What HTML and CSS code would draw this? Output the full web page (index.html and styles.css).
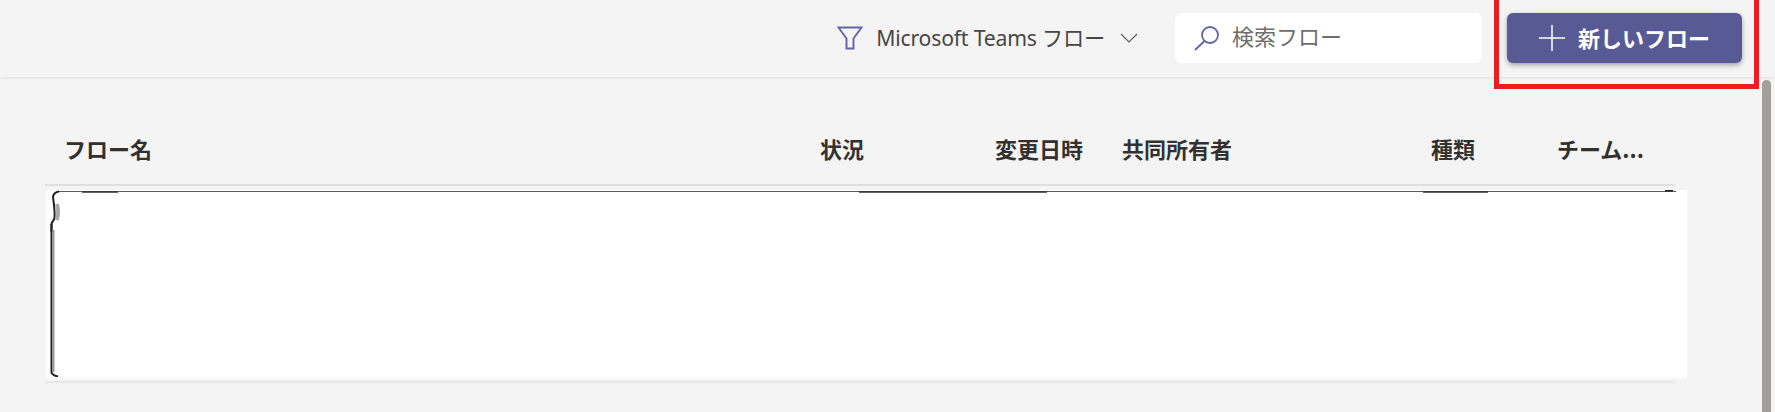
FILE: index.html
```html
<!DOCTYPE html>
<html lang="ja">
<head>
<meta charset="utf-8">
<title>Microsoft Teams フロー</title>
<link rel="stylesheet" href="styles.css">
</head>
<body>
<div class="page">
  <header class="toolbar">
    <div class="filter">
      <svg class="filter-icon" width="26" height="24" viewBox="0 0 26 24" fill="none"><path d="M1.500 1.500H24.500L16.500 12.500V22.500H9.500V12.500Z" stroke="#6264a7" stroke-width="1.900" stroke-linejoin="miter"/></svg>
      <span class="filter-label">Microsoft Teams フロー</span>
      <svg class="chevron" width="18" height="10" viewBox="0 0 18 10" fill="none"><path d="M1 1L9 9L17 1" stroke="#605e5c" stroke-width="1.100"/></svg>
    </div>
    <div class="search">
      <svg class="search-icon" width="26" height="26" viewBox="0 0 26 26" fill="none"><circle cx="16" cy="10" r="8" stroke="#6264a7" stroke-width="1.800"/><path d="M10.500 16L1 25" stroke="#6264a7" stroke-width="1.800"/></svg>
      <span class="search-label">検索フロー</span>
    </div>
    <button class="new-flow">
      <svg class="plus" width="26" height="26" viewBox="0 0 26 26" fill="none"><path d="M13 0V26M0 13H26" stroke="#fff" stroke-width="1.500"/></svg>
      <span class="new-flow-label">新しいフロー</span>
    </button>
  </header>
  <main class="content">
    <div class="table-head">
      <div>フロー名</div>
      <div>状況</div>
      <div>変更日時</div>
      <div>共同所有者</div>
      <div>種類</div>
      <div>チーム...</div>
    </div>
    <div class="masked">
      <svg class="mask-edge" width="1641" height="187" viewBox="0 0 1641 187" fill="none">
        <path d="M12 1.500H1630" stroke="#5a5a5a" stroke-width="1.100"/>
        <path d="M36 2H72M813 2H1001M1377 2H1442" stroke="#333" stroke-width="1.500"/>
        <path d="M1619 0.500h8" stroke="#222" stroke-width="2"/>
        <path d="M13 1.500C9 2 7.500 3.500 7 7C8 14 9 22 8.500 28C8 31 6 31 5.500 34V42" stroke="#222" stroke-width="2"/>
        <path d="M11 14C12.500 20 12.500 26 10.500 30" stroke="#aaa" stroke-width="4"/>
        <path d="M5.500 34V183C7 185 9 186 12 186.500" stroke="#222" stroke-width="2"/>
        <path d="M7.500 40V182" stroke="#999" stroke-width="2"/>
      </svg>
    </div>
    <div class="table-foot"></div>
  </main>
  <div class="callout"></div>
  <div class="scroll-thumb"></div>
</div>
</body>
</html>
```

FILE: styles.css
```css
* { box-sizing: border-box; }
html, body { margin: 0; height: 100%; overflow: hidden; }
body { background: #f4f4f4; font-family: "Noto Sans", "Noto Sans CJK JP", sans-serif; color: #323130; }
.page { position: relative; width: 1775px; height: 412px; overflow: hidden; }

.toolbar { height: 77px; display: flex; align-items: center; justify-content: flex-end; padding: 0 33px 1px 0; gap: 25px; background: #f4f4f4; box-shadow: 0 1px 3px rgba(0,0,0,.09); }
.filter { display: flex; align-items: center; margin-right: 12px; }
.filter-icon { margin-right: 13px; }
.filter-label { font-size: 21.2px; line-height: 28px; color: #484644; letter-spacing: -.2px; }
.chevron { margin-left: 15px; }
.search { width: 307px; height: 50px; background: #fff; border-radius: 6px; display: flex; align-items: center; padding-left: 19px; }
.search-icon { margin-right: 12px; }
.search-label { font-size: 22px; line-height: 28px; color: #706e6c; position: relative; top: -2px; }
.new-flow { width: 235px; height: 50px; border: 0; border-radius: 6px; background: #585a95; color: #fff; display: flex; align-items: center; padding: 0 0 0 32px; gap: 13px; font: 700 22px "Noto Sans CJK JP", sans-serif; box-shadow: 0 2px 5px rgba(0,0,0,.35); }
.new-flow-label { position: relative; top: -1px; }

.content { padding-left: 45px; }
.table-head { width: 1630px; height: 109px; padding: 55px 0 0 19px; display: grid; grid-template-columns: 756px 175px 127px 309px 126px 117px; border-bottom: 2px solid #e1dfdd; font: 700 22px/32px "Noto Sans CJK JP", sans-serif; color: #323130; white-space: nowrap; }
.masked { width: 1641px; height: 187px; margin: 4px 0 0 1px; background: #fff; box-shadow: 0 2px 1px #fafafa; }
.mask-edge { display: block; }
.table-foot { width: 1630px; height: 2px; margin-top: 4px; background: #e9e8e7; }

.callout { position: absolute; left: 1494px; top: -6px; width: 265px; height: 95px; border: 5px solid #ed1c24; }
.scroll-thumb { position: absolute; left: 1762px; top: 80px; width: 9px; bottom: -10px; border-radius: 5px 5px 0 0; background: #a19f9d; }
```
